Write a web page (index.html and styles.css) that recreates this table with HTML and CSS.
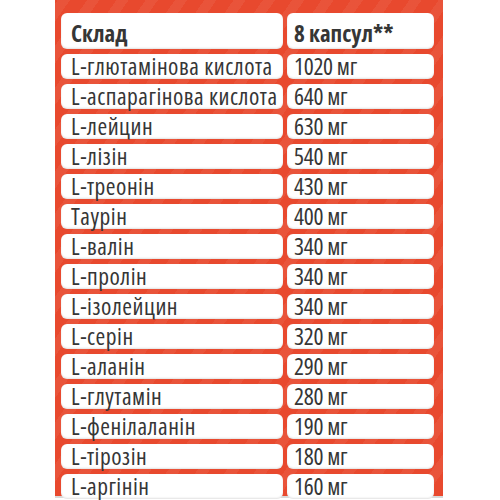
FILE: index.html
```html
<!DOCTYPE html>
<html>
<head>
<meta charset="utf-8">
<link rel="stylesheet" href="styles.css">
</head>
<body>
<div class="page">
  <div class="panel">
    <div class="cell head name">Склад</div>
    <div class="cell head val">8 капсул**</div>
    <div class="cell name">L-глютамінова кислота</div><div class="cell val">1020 мг</div>
    <div class="cell name">L-аспарагінова кислота</div><div class="cell val">640 мг</div>
    <div class="cell name">L-лейцин</div><div class="cell val">630 мг</div>
    <div class="cell name">L-лізін</div><div class="cell val">540 мг</div>
    <div class="cell name">L-треонін</div><div class="cell val">430 мг</div>
    <div class="cell name">Таурін</div><div class="cell val">400 мг</div>
    <div class="cell name">L-валін</div><div class="cell val">340 мг</div>
    <div class="cell name">L-пролін</div><div class="cell val">340 мг</div>
    <div class="cell name">L-ізолейцин</div><div class="cell val">340 мг</div>
    <div class="cell name">L-серін</div><div class="cell val">320 мг</div>
    <div class="cell name">L-аланін</div><div class="cell val">290 мг</div>
    <div class="cell name">L-глутамін</div><div class="cell val">280 мг</div>
    <div class="cell name">L-фенілаланін</div><div class="cell val">190 мг</div>
    <div class="cell name">L-тірозін</div><div class="cell val">180 мг</div>
    <div class="cell name">L-аргінін</div><div class="cell val">160 мг</div>
  </div>
</div>
</body>
</html>
```
FILE: styles.css
```css
html, body {
  margin: 0;
  padding: 0;
  background: #ffffff;
}
.page {
  width: 500px;
  height: 500px;
  overflow: hidden;
  padding-left: 55px;
  box-sizing: border-box;
}
.panel {
  width: 388px;
  height: 498px;
  box-sizing: border-box;
  padding: 13px 9px 0 6px;
  background-color: #e8492e;
  background-image: repeating-linear-gradient(-55deg, rgba(255,255,255,0) 0 14px, rgba(255,255,255,0.06) 14px 24px);
  border-bottom: 2px solid #d9d9d9;
  display: grid;
  grid-template-columns: 222px 147px;
  grid-auto-rows: 25px;
  grid-template-rows: 36px;
  column-gap: 4px;
  row-gap: 5px;
  align-content: start;
  font-family: "Open Sans", "Roboto", sans-serif;
  font-stretch: 75%;
  color: #363636;
}
.cell {
  background: #ffffff;
  border-radius: 6px;
  font-size: 23.5px;
  line-height: 25px;
  white-space: nowrap;
  box-shadow: inset 0 -1px 2px rgba(0,0,0,0.12);
}
.name {
  padding-left: 10px;
  letter-spacing: 0.5px;
}
.val {
  padding-left: 7px;
  letter-spacing: -0.3px;
}
.head {
  font-size: 23px;
  font-weight: 700;
  letter-spacing: 0;
  display: flex;
  align-items: flex-end;
  padding-bottom: 3px;
  box-sizing: border-box;
}
```
